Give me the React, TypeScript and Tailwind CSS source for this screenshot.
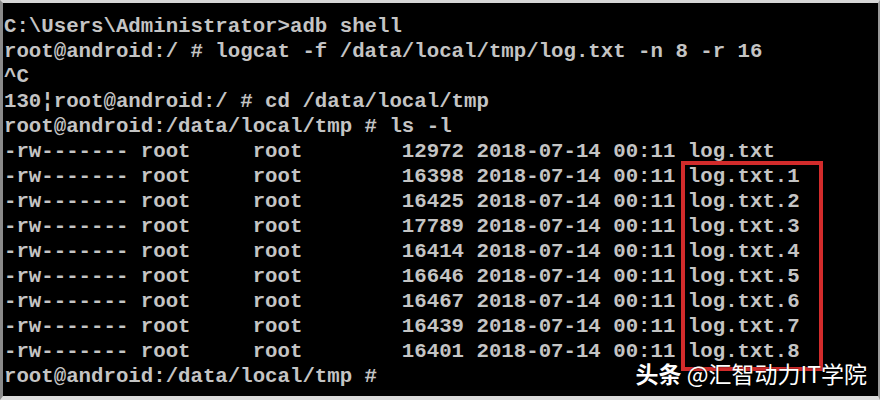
import React from "react";

const sizes = ["12972", "16398", "16425", "17789", "16414", "16646", "16467", "16439", "16401"];

export default function App() {
  const lines: string[] = [
    "C:\\Users\\Administrator>adb shell",
    "root@android:/ # logcat -f /data/local/tmp/log.txt -n 8 -r 16",
    "^C",
    "130\u00a6root@android:/ # cd /data/local/tmp",
    "root@android:/data/local/tmp # ls -l",
    ...sizes.map(
      (s, i) => `-rw------- root     root        ${s} 2018-07-14 00:11 log.txt${i === 0 ? "" : "." + i}`
    ),
    "root@android:/data/local/tmp #",
  ];
  return (
    <div className="relative w-[880px] h-[400px] overflow-hidden bg-black border-t-[3px] border-t-[#d6d6d6] border-l-[3px] border-l-[#8a8a8a] border-b-[4px] border-b-[#dcdcdc] border-r-[2px] border-r-[#9a9a9a]">
      <pre
        className="m-0 pt-[11px] pl-[1px] text-[20.73px] leading-[25px] font-bold text-[#c4c4c4] whitespace-pre"
        style={{ fontFamily: '"Liberation Mono", "DejaVu Sans Mono", monospace' }}
      >
        {lines.map((l, i) => (
          <div key={i}>{l}</div>
        ))}
      </pre>
      <div className="absolute left-[678px] top-[158px] w-[142px] h-[210px] border-4 border-[#d22b2b]" />
      <div
        className="absolute right-[11px] bottom-[11px] text-[23px] leading-none text-white whitespace-nowrap [text-shadow:0_0_2px_rgba(0,0,0,0.8)]"
        style={{ fontFamily: '"Noto Sans CJK SC", "Noto Sans", sans-serif' }}
      >
        <span className="font-bold">头条</span>
        <span> @汇智动力IT学院</span>
      </div>
    </div>
  );
}
